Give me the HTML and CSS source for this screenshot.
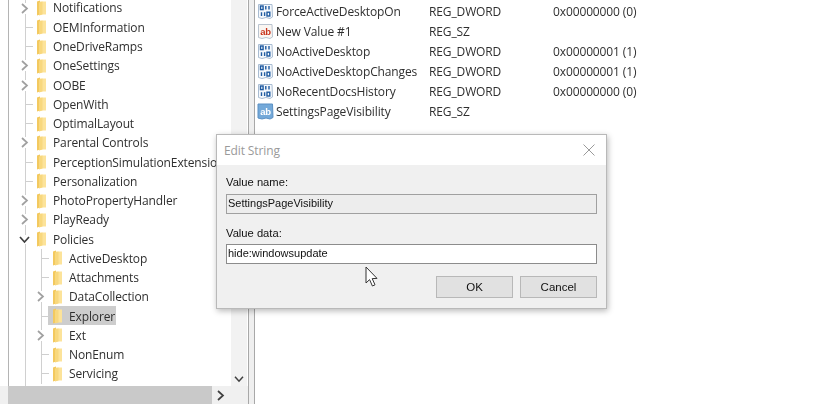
FILE: index.html
```html
<!DOCTYPE html>
<html lang="en">
<head>
<meta charset="utf-8">
<title>Edit String</title>
<link rel="stylesheet" href="styles.css">
</head>
<body>
<svg class="defs" width="0" height="0" aria-hidden="true">
  <symbol id="folder" viewBox="0 0 10 16">
    <path d="M1 1.5 L4 0.5 V14.5 L1 15.5 Z" fill="#f3c95f"/>
    <path d="M4 1.5 H10 V14.5 H4 Z" fill="#fce39a"/>
    <path d="M3 2.5 L6.5 1.5 V14.5 L3 15.5 Z" fill="#f8d87e"/>
  </symbol>
  <symbol id="chev-r" viewBox="0 0 9 11">
    <path d="M2 1 L7 5.5 L2 10" fill="none" stroke="#a0a0a0" stroke-width="1.7"/>
  </symbol>
  <symbol id="chev-r-dark" viewBox="0 0 9 11">
    <path d="M2 1 L7 5.5 L2 10" fill="none" stroke="#404040" stroke-width="1.7"/>
  </symbol>
  <symbol id="chev-d" viewBox="0 0 11 9">
    <path d="M1 2 L5.5 7 L10 2" fill="none" stroke="#404040" stroke-width="1.7"/>
  </symbol>
  <symbol id="bin" viewBox="0 0 17 17">
    <path d="M1.5 1.5 H15 L15.5 14 L13 15.5 L9 14.5 L5 15.5 L1.5 14.5 Z" fill="#f4f8fc" stroke="#a9bcd2"/>
    <g fill="none" stroke="#1f5aa0" stroke-width="1.4">
      <rect x="3.5" y="3" width="2.6" height="3.6"/>
      <path d="M8.8 3 V6.6 M12 3 V6.6"/>
      <path d="M4.5 9.2 V13 M7.6 9.2 V13"/>
      <rect x="10" y="9.2" width="2.8" height="3.8"/>
    </g>
  </symbol>
</svg>

<div class="app">
  <div class="tree-pane">
    <div class="tree-main">
      <ul class="tree">
        <li class="row branch"><svg class="chev"><use href="#chev-r"/></svg><svg class="folder"><use href="#folder"/></svg><span>Notifications</span></li>
        <li class="row leaf"><svg class="folder"><use href="#folder"/></svg><span>OEMInformation</span></li>
        <li class="row leaf"><svg class="folder"><use href="#folder"/></svg><span>OneDriveRamps</span></li>
        <li class="row branch"><svg class="chev"><use href="#chev-r"/></svg><svg class="folder"><use href="#folder"/></svg><span>OneSettings</span></li>
        <li class="row branch"><svg class="chev"><use href="#chev-r"/></svg><svg class="folder"><use href="#folder"/></svg><span>OOBE</span></li>
        <li class="row leaf"><svg class="folder"><use href="#folder"/></svg><span>OpenWith</span></li>
        <li class="row leaf"><svg class="folder"><use href="#folder"/></svg><span>OptimalLayout</span></li>
        <li class="row branch"><svg class="chev"><use href="#chev-r"/></svg><svg class="folder"><use href="#folder"/></svg><span>Parental Controls</span></li>
        <li class="row leaf"><svg class="folder"><use href="#folder"/></svg><span>PerceptionSimulationExtensions</span></li>
        <li class="row leaf"><svg class="folder"><use href="#folder"/></svg><span>Personalization</span></li>
        <li class="row branch"><svg class="chev"><use href="#chev-r"/></svg><svg class="folder"><use href="#folder"/></svg><span>PhotoPropertyHandler</span></li>
        <li class="row branch"><svg class="chev"><use href="#chev-r"/></svg><svg class="folder"><use href="#folder"/></svg><span>PlayReady</span></li>
        <li class="row branch open"><svg class="chev-open"><use href="#chev-d"/></svg><svg class="folder"><use href="#folder"/></svg><span>Policies</span></li>
        <li class="row leaf sub"><svg class="folder"><use href="#folder"/></svg><span>ActiveDesktop</span></li>
        <li class="row leaf sub"><svg class="folder"><use href="#folder"/></svg><span>Attachments</span></li>
        <li class="row branch sub"><svg class="chev"><use href="#chev-r"/></svg><svg class="folder"><use href="#folder"/></svg><span>DataCollection</span></li>
        <li class="row leaf sub selected"><svg class="folder"><use href="#folder"/></svg><span>Explorer</span></li>
        <li class="row branch sub"><svg class="chev"><use href="#chev-r"/></svg><svg class="folder"><use href="#folder"/></svg><span>Ext</span></li>
        <li class="row leaf sub"><svg class="folder"><use href="#folder"/></svg><span>NonEnum</span></li>
        <li class="row leaf sub"><svg class="folder"><use href="#folder"/></svg><span>Servicing</span></li>
      </ul>
      <div class="vbar"><svg class="vbar-arrow"><use href="#chev-d"/></svg></div>
    </div>
    <div class="hbar">
      <div class="hthumb"></div>
      <svg class="hbar-arrow"><use href="#chev-r-dark"/></svg>
    </div>
  </div>
  <div class="splitter"></div>
  <div class="values">
    <div class="val"><svg class="ico"><use href="#bin"/></svg><span class="name">ForceActiveDesktopOn</span><span class="type">REG_DWORD</span><span>0x00000000 (0)</span></div>
    <div class="val"><svg class="ico" viewBox="0 0 17 17"><path d="M1.5 1.5 H15 L15.5 14 L13 15.5 L9 14.5 L5 15.5 L1.5 14.5 Z" fill="#faf6f2" stroke="#b9c3cf"/><text x="8.5" y="11.5" text-anchor="middle" class="ico-text ico-red">ab</text></svg><span class="name">New Value #1</span><span class="type">REG_SZ</span></div>
    <div class="val"><svg class="ico"><use href="#bin"/></svg><span class="name">NoActiveDesktop</span><span class="type">REG_DWORD</span><span>0x00000001 (1)</span></div>
    <div class="val"><svg class="ico"><use href="#bin"/></svg><span class="name">NoActiveDesktopChanges</span><span class="type">REG_DWORD</span><span>0x00000001 (1)</span></div>
    <div class="val"><svg class="ico"><use href="#bin"/></svg><span class="name">NoRecentDocsHistory</span><span class="type">REG_DWORD</span><span>0x00000000 (0)</span></div>
    <div class="val"><svg class="ico" viewBox="0 0 17 17"><path d="M1 1 H15.5 L16 14.5 L13 16 L9 15 L5 16 L1 15 Z" fill="#74a9d9" stroke="#5a90c4"/><text x="8.5" y="11.5" text-anchor="middle" class="ico-text ico-white">ab</text></svg><span class="name">SettingsPageVisibility</span><span class="type">REG_SZ</span></div>
  </div>
</div>

<div class="dialog">
  <div class="titlebar">
    <span class="title">Edit String</span>
    <svg class="close" viewBox="0 0 12 12"><path d="M0.5 0.5 L11.5 11.5 M11.5 0.5 L0.5 11.5" stroke="#9a9a9a" stroke-width="1" fill="none"/></svg>
  </div>
  <div class="body">
    <label class="label">Value name:</label>
    <div class="field readonly">SettingsPageVisibility</div>
    <label class="label second">Value data:</label>
    <div class="field">hide:windowsupdate</div>
    <div class="buttons">
      <button class="btn">OK</button>
      <button class="btn">Cancel</button>
    </div>
  </div>
</div>

<svg class="cursor" viewBox="0 0 13 22"><path d="M1 1 V17 L4.6 13.6 L7.4 20 L10 18.8 L7.2 12.6 L12 12.4 Z" fill="#fff" stroke="#333" stroke-width="1"/></svg>
</body>
</html>
```

FILE: styles.css
```css
* { box-sizing: border-box; }
html, body { margin: 0; padding: 0; height: 404px; overflow: hidden; background: #fff; }
body {
  position: relative;
  width: 825px;
  font-family: "Open Sans", "Noto Sans", sans-serif;
  font-size: 12px;
  letter-spacing: -0.12px;
  color: #2f2f2f;
}
.defs { position: absolute; }
.ico-text { font: bold 9.5px "Liberation Sans", sans-serif; letter-spacing: -0.3px; }
.ico-red { fill: #c8341c; }
.ico-white { fill: #fff; }
.app { display: flex; height: 404px; filter: blur(0.3px); }

/* tree pane */
.tree-pane { width: 248px; display: flex; flex-direction: column; padding-left: 8px; }
.tree-main { flex: 1; display: flex; min-height: 0; border-left: 1px solid #b4b4b4; }
.tree {
  position: relative;
  z-index: 0;
  list-style: none;
  margin: 0;
  padding: 0;
  width: 222px;
  background: linear-gradient(#d0d0d0, #d0d0d0) 16px 0 / 1px 100% no-repeat;
}
.row {
  position: relative;
  height: 19.25px;
  display: flex;
  align-items: center;
  padding-left: 27px;
  white-space: nowrap;
}
.row:first-child { height: 17.75px; align-items: flex-start; }
.row:first-child span { line-height: 16px; }
.row:first-child .chev { top: 2.5px; }
.row span { margin-left: 7px; line-height: 19px; }
.folder { width: 10px; height: 16px; flex: none; }
.chev, .chev-open { position: absolute; background: #fff; }
.chev { left: 11px; top: 4px; width: 9px; height: 11px; }
.chev-open { left: 10px; top: 5px; width: 11px; height: 9px; }
.leaf::before {
  content: "";
  position: absolute;
  left: 17px;
  top: 9px;
  width: 7px;
  height: 1px;
  background: #cfcfcf;
}
.sub {
  padding-left: 43px;
  background: linear-gradient(#d0d0d0, #d0d0d0) 32px 0 / 1px 100% no-repeat;
}
.sub.leaf::before { left: 33px; }
.sub .chev { left: 27px; }
.selected::after {
  content: "";
  position: absolute;
  left: 39px;
  top: -1px;
  width: 68px;
  height: 19px;
  background: #cdcdcd;
  z-index: -1;
}
.vbar { width: 16px; background: #f2f2f2; display: flex; flex-direction: column; justify-content: flex-end; align-items: center; padding-bottom: 3px; }
.vbar-arrow { width: 10px; height: 8px; }
.hbar { height: 18px; display: flex; align-items: center; background: #f0f0f0; margin-left: -8px; padding-left: 8px; }
.hthumb { width: 204px; height: 18px; background: #c9c9c9; }
.hbar-arrow { width: 9px; height: 11px; margin-left: 4px; }

/* splitter */
.splitter {
  width: 7px;
  flex: none;
  background: #efefef;
  border-left: 1px solid #a8a8a8;
  border-right: 1px solid #a8a8a8;
}

/* values */
.values { flex: 1; padding: 1px 0 0 2px; }
.val { display: flex; align-items: center; height: 20px; white-space: nowrap; }
.ico { width: 17px; height: 17px; flex: none; }
.name { width: 153px; margin-left: 2px; }
.type { width: 124px; }

/* dialog */
.dialog {
  position: absolute;
  left: 216px;
  top: 134px;
  width: 391px;
  height: 175px;
  display: flex;
  flex-direction: column;
  border: 1px solid #b9b9b9;
  background: #f0f0f0;
  box-shadow: 1px 2px 6px rgba(0, 0, 0, .28);
  font-family: "Liberation Sans", Arial, sans-serif;
  font-size: 11px;
  letter-spacing: 0;
  color: #111;
  filter: blur(0.25px);
}
.titlebar {
  height: 30px;
  background: #fff;
  display: flex;
  align-items: center;
  justify-content: space-between;
  padding: 0 11px 0 7px;
  flex: none;
}
.title { font-family: "Open Sans", sans-serif; font-size: 12px; letter-spacing: -0.12px; color: #9a9a9a; }
.close { width: 12px; height: 12px; }
.body { flex: 1; padding: 10px 9px 0; display: flex; flex-direction: column; }
.label { line-height: 14px; height: 19px; font-size: 11.2px; }
.label.second { margin-top: 12px; height: 18px; }
.field {
  height: 20px;
  border: 1px solid #8c8c8c;
  background: #fff;
  line-height: 17px;
  padding-left: 1px;
}
.field.readonly { background: #ededed; border-color: #a0a0a0; }
.buttons { display: flex; justify-content: flex-end; gap: 7px; margin-top: 12px; }
.btn {
  width: 77px;
  height: 22px;
  padding: 0 0 1px;
  border: 1px solid #b8b8b8;
  background: #e1e1e1;
  font: inherit;
  font-size: 11.5px;
  color: #111;
}
.cursor { position: absolute; left: 365px; top: 266px; width: 13px; height: 22px; }
```
